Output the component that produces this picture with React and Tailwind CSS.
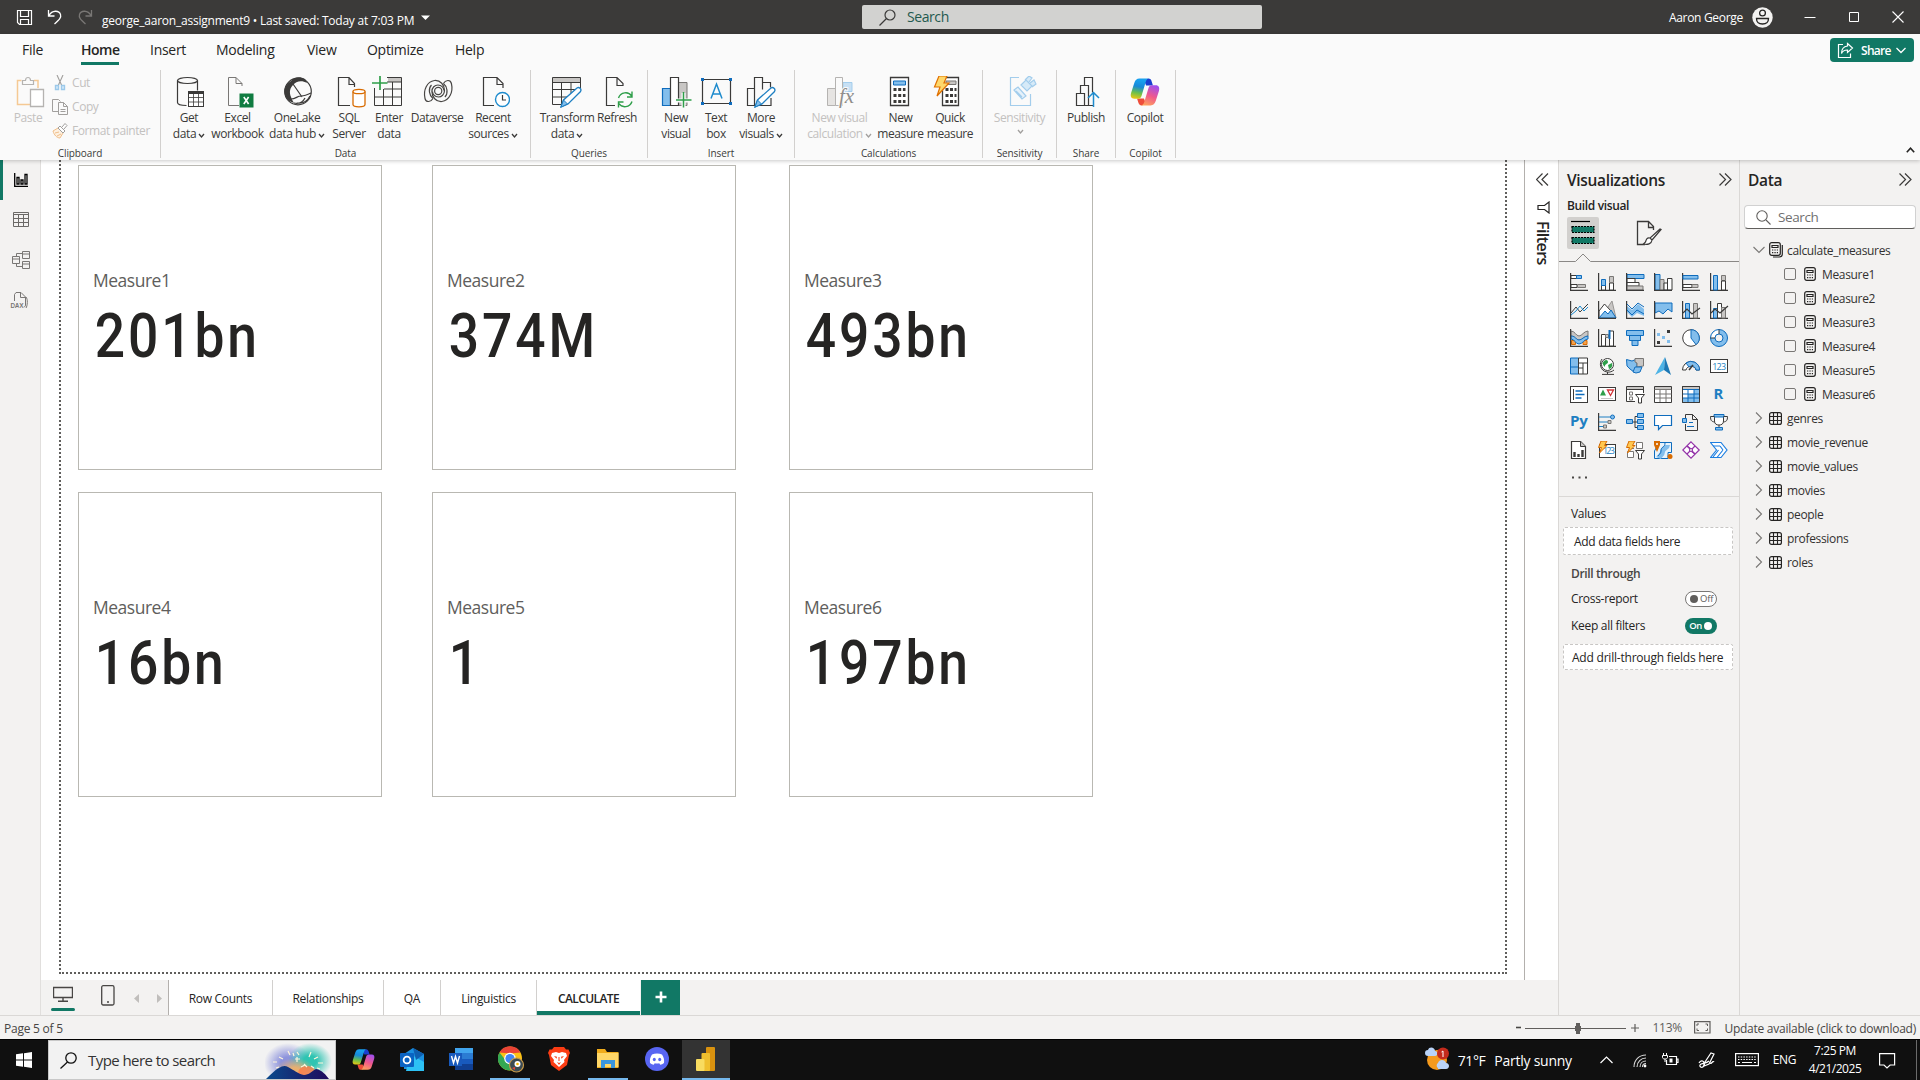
import React from "react";

const INK = "#3b3a39";
const BLUE = "#0f6cbd";
const SKY = "#83beec";
const GREY = "#c8c6c4";

function Svg({ w, h = w, children, className = "", vb }) {
  return (
    <svg width={w} height={h} viewBox={vb || `0 0 ${w} ${h}`} fill="none" className={"block shrink-0 " + className}>
      {children}
    </svg>
  );
}

function Caret({ color = INK }) {
  return (
    <svg width="7" height="6" viewBox="0 0 7 6" fill="none" className="ml-[2px] mt-[3px] block shrink-0">
      <path d="M1 1l2.500 3L6 1" stroke={color} strokeWidth="1.300" />
    </svg>
  );
}

function CopilotLogo({ size, id }) {
  return (
    <svg width={size} height={size} viewBox="0 0 28 28" className="block shrink-0">
      <defs>
        <linearGradient id={id + "a"} x1="10" y1="1" x2="6" y2="21" gradientUnits="userSpaceOnUse">
          <stop offset="0.1" stopColor="#18a0ee" />
          <stop offset="0.4" stopColor="#1789d8" />
          <stop offset="0.7" stopColor="#6cc04a" />
          <stop offset="1" stopColor="#f7c80c" />
        </linearGradient>
        <linearGradient id={id + "b"} x1="23" y1="8" x2="15" y2="27" gradientUnits="userSpaceOnUse">
          <stop offset="0" stopColor="#a04fee" />
          <stop offset="0.5" stopColor="#f0588c" />
          <stop offset="1" stopColor="#ffa45a" />
        </linearGradient>
      </defs>
      <path d="M17 1.500c2 0 2.800 1.200 3.300 2.900L21.400 8H15l-2-5z" fill="#1a3fd0" />
      <path d="M11 26.500c-2 0-2.800-1.200-3.300-2.900L6.600 20H13l2 5z" fill="#ee4d3a" />
      <path d="M8.800 1.500h9c-1.800 0-2.600 1.400-3.200 3.400l-3.800 12.500c-.5 1.700-1.500 2.800-3.400 2.800H4c-3 0-3.800-2.300-3-5.200L4 5.500c.8-2.500 2.300-4 4.800-4z" fill={`url(#${id}a)`} />
      <path d="M19.200 26.500h-9c1.800 0 2.600-1.400 3.200-3.400l3.800-12.500c.5-1.700 1.500-2.800 3.400-2.800H24c3 0 3.800 2.300 3 5.200l-3 9.500c-.8 2.500-2.300 4-4.800 4z" fill={`url(#${id}b)`} />
    </svg>
  );
}

const pageShape = "M21 10v-2.500L15 1.500H7.500v28H18M15 1.500v6h6";

const R = {
  getData: (
    <>
      <path d="M5.500 4.500v22c0 1.800 4 3 9 3M25.500 4.500v10" stroke={INK} strokeWidth="1.200" />
      <ellipse cx="15.500" cy="4.500" rx="10" ry="3" stroke={INK} strokeWidth="1.200" />
      <rect x="16.500" y="15.500" width="15" height="15" fill="#fff" stroke={INK} />
      <path d="M16.500 17h15" stroke={INK} strokeWidth="2" />
      <path d="M16.500 21.500h15M16.500 26h15M21.500 18v12M26.500 18v12" stroke={INK} strokeWidth=".8" />
    </>
  ),
  excel: (
    <>
      <path d={pageShape} stroke="#797775" />
      <rect x="18.500" y="17.500" width="14" height="14" fill="#107c41" />
      <path d="M22.800 21l4.800 7M27.600 21l-4.800 7" stroke="#fff" strokeWidth="1.600" />
    </>
  ),
  onelake: (
    <>
      <circle cx="18" cy="15.500" r="13.300" stroke={INK} strokeWidth="1.200" />
      <path d="M11 5c3-4 9-5 14-2l2 4c-5-3-11-2-14 2-3 3-4 7-2 12 1 3 2 4 3 6C7 25 4 20 4.500 14c.5-4 3-7 6.500-9z" fill={INK} />
      <path d="M13 8l9 13M11 23c5 0 6-3 10-3s6-1 10-3M14 27c5 1 9-1 11-5M17 27c7 1 11-3 13-7" stroke={INK} strokeWidth="1.200" />
    </>
  ),
  sql: (
    <>
      <path d="M22.500 11V7.500L17 1.500H6.500v28H18M17 1.500v7h5.500" stroke={INK} strokeWidth="1.200" />
      <path d="M21 15.500v13c0 1.500 2.500 2.300 6 2.300s6-.8 6-2.300v-13" fill="#fff" stroke="#d86b00" strokeWidth="1.300" />
      <ellipse cx="27" cy="15.500" rx="6" ry="2.200" fill="#fff" stroke="#d86b00" strokeWidth="1.300" />
    </>
  ),
  enter: (
    <>
      <path d="M16 2h13v4H16z" fill={GREY} />
      <path d="M15 1.500h14.500v28h-27V12M2.500 21h27M12 13h17.500M11.500 13v16M20.500 6v23M15 6h14.500" stroke={INK} strokeWidth="1" />
      <path d="M0 7h15.500M8 0v14" stroke="#2e9e49" strokeWidth="1.700" />
    </>
  ),
  dataverse: (
    <g stroke="#484644" strokeWidth="1.200">
      <path d="M13 22.500c-2 3.500-7 4.500-8 0C3 14 7 5.500 14.500 4.500c6-.5 10 4.500 10 10 0 4-3 6.500-6 6.500-4 0-6-3-6-5.500" />
      <path d="M13 22.500c-4-3-5-10-1.500-13.500" />
      <g transform="rotate(180 18.200 15)">
        <path d="M13 22.500c-2 3.500-7 4.500-8 0C3 14 7 5.500 14.500 4.500c6-.5 10 4.500 10 10 0 4-3 6.500-6 6.500-4 0-6-3-6-5.500" />
        <path d="M13 22.500c-4-3-5-10-1.500-13.500" />
      </g>
      <circle cx="18.200" cy="15" r="3.600" />
    </g>
  ),
  recent: (
    <>
      <path d="M27 12V7.500L21 1.500H7.500v28H18M21 1.500v7h6" stroke={INK} strokeWidth="1.200" />
      <circle cx="26.500" cy="23.500" r="7" fill="#fff" stroke="#1e8bcd" strokeWidth="1.400" />
      <path d="M26.500 19v5H30" stroke={INK} strokeWidth="1.200" />
    </>
  ),
  transform: (
    <>
      <path d="M3 2h27v4H3z" fill={GREY} />
      <path d="M12 28.500H2.500v-27h28V12M2.500 6.500h28M2.500 13.500H25M2.500 21H19M11.500 6.500v22M21 6.500V17" stroke={INK} />
      <path d="M11 31l2.500-7L27 12c2-1.500 5 1 3.500 3.500L18 28z" fill="#fff" stroke="#1e7fc2" strokeWidth="1.300" />
      <path d="M11 31l2.500-7 4 4z" fill={SKY} stroke="#1e7fc2" />
    </>
  ),
  refresh: (
    <>
      <path d="M23 10V7.500L17 1.500H6.500v28H15M17 1.500v8h6" stroke={INK} strokeWidth="1.200" />
      <path d="M18.500 22c2-6 10-7 13-2M32 15.500v5.500h-5M32 25.500c-2 6-10 7-13 2M18.500 31.500V26h5" stroke="#2e9e49" strokeWidth="1.400" />
    </>
  ),
  newVisual: (
    <>
      <path d="M3.500 12.500h8v17h-8z" fill={SKY} stroke={BLUE} strokeWidth="1.200" />
      <path d="M19 6.500h9v23h-9z" fill={GREY} stroke="#797775" />
      <path d="M11.500 1.500h8v28h-8z" fill="#fff" stroke={INK} strokeWidth="1.200" />
      <path d="M17 24.500h15M24.500 17v15" stroke="#fafafa" strokeWidth="4" />
      <path d="M17 24h15.500M24.500 16v15.500" stroke="#2e9e49" strokeWidth="1.500" />
    </>
  ),
  textBox: (
    <>
      <path d="M3.500 3.500h28v24h-28z" stroke={INK} strokeWidth="1.200" />
      <path d="M2 2h3v3H2zM30 2h3v3h-3zM2 26h3v3H2zM30 26h3v3h-3z" fill={BLUE} />
      <path d="M12 22.500L17.500 8 23 22.500M13.800 18h7.400" stroke="#1e8bcd" strokeWidth="1.500" />
    </>
  ),
  more: (
    <>
      <path d="M3.500 12.500h7v17h-7zM10.500 29.500v-28h8v12M18.500 6.500h8v5M27 22v7.500H15" stroke={INK} strokeWidth="1.200" />
      <path d="M11 31l2.500-7L27 12c2-1.500 5 1 3.500 3.500L18 28z" fill="#fff" stroke="#1e7fc2" strokeWidth="1.300" />
      <path d="M11 31l2.500-7 4 4z" fill={SKY} stroke="#1e7fc2" />
    </>
  ),
  visualCalc: (
    <>
      <path d="M4.500 12.500h8v17h-8z" fill="#e6e4e2" stroke="#b5b3b1" />
      <path d="M20 6.500h9v9h-9z" fill="#c7e0f4" stroke="#a3cdec" />
      <path d="M12.500 1.500h7v28h-7z" fill="#fafafa" stroke="#b5b3b1" />
      <text x="16" y="27" fontFamily="Liberation Serif" fontStyle="italic" fontSize="21" fill="#8f8d8b" stroke="#fafafa" strokeWidth="2" paintOrder="stroke">fx</text>
    </>
  ),
  newMeasure: (
    <>
      <path d="M6.500 1.500h18v28h-18z" stroke={INK} strokeWidth="1.300" fill="#fff" />
      <path d="M9.500 5h12v4h-12z" fill={SKY} stroke={BLUE} />
      <path d="M9.500 13.500h12M9.500 19.500h12M9.500 25.500h12" stroke={INK} strokeWidth="3" strokeDasharray="3 1.700" />
    </>
  ),
  quick: (
    <>
      <path d="M9.500 1.500h16v28h-16z" stroke={INK} strokeWidth="1.300" fill="#fff" />
      <path d="M13 5h10v3.500H13z" fill={GREY} stroke="#797775" />
      <path d="M12.500 13.500h11M12.500 19.500h11M12.500 25.500h11" stroke={INK} strokeWidth="3" strokeDasharray="3 1.500" />
      <path d="M6 0h8l-3 7h5L4 20l3-9H1.500z" fill="#ffd86b" stroke="#e07000" strokeWidth="1.200" />
    </>
  ),
  sensitivity: (
    <g stroke="#a3cdec" strokeWidth="1.200">
      <path d="M16 1.500H7.500v28h20V18" />
      <path d="M11 14l4-3 8 9-4 3zM13 15l6 6" fill="#e5f1fa" />
      <path d="M18 9l5-5 6 6-5 5zM22 4l4-4 3 2-3 4M27 7l4-3 2 4-4 3" fill="#d6eaf8" />
    </g>
  ),
  publish: (
    <>
      <path d="M7.500 17.500h8v12h-8zM11.500 17V9.500h8v20H15M15.500 9V1.500h8v15M19.500 29.500H24" stroke={INK} strokeWidth="1.200" />
      <path d="M24.500 31V17M19 22l5.500-5.500L30 22" stroke="#1e8bcd" strokeWidth="1.500" />
    </>
  ),
};

function Btn({ icon, l1, l2, caret, width, off }) {
  return (
    <div className={"flex shrink-0 flex-col items-center pt-[6px] " + width + (off ? " text-[#c3c1bf]" : " text-[#3b3a39]")}>
      <div className="h-[34px]">
        {icon === "copilot" ? (
          <div className="pt-px"><CopilotLogo size={30} id="ribbon" /></div>
        ) : (
          <Svg w={34} h={32}>{R[icon]}</Svg>
        )}
      </div>
      <span className="whitespace-nowrap text-[12px] leading-4 tracking-[-0.035em]">{l1}</span>
      <span className="flex items-center whitespace-nowrap text-[12px] leading-4 tracking-[-0.035em]">
        {l2}
        {caret && <Caret color={off ? "#a19f9d" : INK} />}
      </span>
    </div>
  );
}

function Group({ label, width, pad = "", children }) {
  return (
    <div className={"flex h-[88px] shrink-0 flex-col justify-between border-r border-[#d2d0ce] " + width}>
      <div className={"flex " + pad}>{children}</div>
      <div className="h-[10px] text-center text-[10px] leading-[11px] text-[#3b3a39] tracking-[-0.01em]">{label}</div>
    </div>
  );
}

function TitleBar() {
  return (
    <header className="flex h-[34px] shrink-0 items-center bg-[#3b3a39] text-white">
      <div className="flex w-[862px] items-center pl-[16px]">
        <Svg w={17}>
          <path d="M1.500 1.500h14v14h-12l-2-2zM4.500 1.500v6h8v-6M4.500 15.500v-5h8v5" stroke="#fff" strokeWidth="1.200" />
        </Svg>
        <Svg w={16} className="ml-[14px]">
          <path d="M1.500 1v6h6M2 6.500C5 1 12 1 13.500 5.500c1 3-1 5-6 9.500" stroke="#fff" strokeWidth="1.300" />
        </Svg>
        <Svg w={16} className="ml-[14px]">
          <path d="M14.500 1v6h-6M14 6.500C11 1 4 1 2.500 5.500c-1 3 1 5 6 9.500" stroke="#797775" strokeWidth="1.300" />
        </Svg>
        <span className="ml-[9px] mt-[7px] whitespace-nowrap text-[12px] leading-4 tracking-[-0.019em]">
          george_aaron_assignment9 • Last saved: Today at 7:03 PM
        </span>
        <Svg w={9} h={6} className="ml-[7px] mt-[2px]"><path d="M0 0.500h9L4.500 5z" fill="#fff" /></Svg>
      </div>
      <div className="flex h-[24px] w-[400px] items-center rounded-[2px] bg-[#d2d2d0] pl-[17px]">
        <Svg w={17}><circle cx="11" cy="6" r="5" stroke={INK} strokeWidth="1.200" /><path d="M7.500 9.500l-7 7" stroke={INK} strokeWidth="1.200" /></Svg>
        <span className="ml-[11px] text-[14px] leading-5 tracking-[-0.03em] text-[#23594e]">Search</span>
      </div>
      <div className="flex flex-1 items-center justify-end pr-[16px]">
        <span className="mr-[9px] mt-[2px] text-[12px] tracking-[-0.025em]">Aaron George</span>
        <Svg w={21}>
          <circle cx="10.500" cy="10.500" r="10.200" fill="#f3f2f1" />
          <circle cx="10.500" cy="6" r="2.900" stroke="#252423" strokeWidth="1.300" />
          <path d="M4.500 11.500h12c0 3.500-2 5.500-6 5.500s-6-2-6-5.500z" stroke="#252423" strokeWidth="1.300" />
        </Svg>
        <Svg w={12} className="ml-[31px]"><path d="M0.500 6.500h11" stroke="#fff" /></Svg>
        <Svg w={12} className="ml-[32px]"><path d="M1.500 1.500h9v9h-9z" stroke="#fff" /></Svg>
        <Svg w={12} className="ml-[32px]"><path d="M0.500 0.500l11 11M11.500 0.500l-11 11" stroke="#fff" strokeWidth="1.100" /></Svg>
      </div>
    </header>
  );
}

function Ribbon() {
  return (
    <div className="relative z-10 flex h-[126px] shrink-0 flex-col bg-[#fafafa] shadow-[0_1px_4px_rgba(0,0,0,0.22)]">
      <div className="flex h-[36px] items-start text-[14px] leading-5 tracking-[-0.02em] text-[#252423]">
        <span className="w-[58px] pl-[22px] pt-[6px]">File</span>
        <div className="ml-[23px] flex w-[38px] flex-col pt-[6px]">
          <span className="font-semibold tracking-[-0.035em]">Home</span>
          <span className="mt-[2px] h-[3px] bg-[#117865]" />
        </div>
        <span className="ml-[31px] w-[66px] pt-[6px]">Insert</span>
        <span className="w-[91px] pt-[6px]">Modeling</span>
        <span className="w-[60px] pt-[6px]">View</span>
        <span className="w-[88px] pt-[6px]">Optimize</span>
        <span className="flex-1 pt-[6px]">Help</span>
        <div className="mr-[6px] mt-[4px] flex h-[24px] w-[84px] items-center rounded-[4px] bg-[#117865] pl-[7px] text-white">
          <Svg w={17}>
            <path d="M6 2.500H1.500v13h12v-4" stroke="#fff" strokeWidth="1.200" />
            <path d="M10.500 1.500l5 4.500-5 4.500V8C7 8 5.500 9 4.500 11.500c0-4 2-7 6-7.500z" stroke="#fff" strokeWidth="1.200" />
          </Svg>
          <span className="ml-[7px] pt-px text-[12px] font-semibold tracking-[-0.06em]">Share</span>
          <Svg w={10} h={7} className="ml-[5px]"><path d="M0.500 1L5 5.500 9.500 1" stroke="#fff" strokeWidth="1.300" /></Svg>
        </div>
      </div>
      <div className="flex h-[90px]">
        <Group label="Clipboard" width="w-[161px]">
          <div className="flex w-[52px] flex-col items-center pl-[8px] pt-[6px]">
            <div className="h-[34px]">
              <Svg w={30} h={32}>
                <path d="M6.500 4.500H2.500v24H15M19 4.500h4V12" stroke="#f5c994" strokeWidth="1.500" />
                <path d="M7.500 8.500v-4h3c0-4 5-4 5 0h3v4z" stroke="#b5b3b1" strokeWidth="1.200" />
                <path d="M15.500 13.500h13v17h-13z" fill="#fff" stroke="#b5b3b1" strokeWidth="1.300" />
              </Svg>
            </div>
            <span className="-ml-[4px] text-[12px] leading-4 tracking-[-0.035em] text-[#c3c1bf]">Paste</span>
          </div>
          <div className="flex flex-col text-[12px] tracking-[-0.035em] text-[#c3c1bf]">
            <div className="flex h-[24px] items-center gap-[4px] pt-[2px]">
              <Svg w={16}>
                <path d="M5 0l5 11M11 0L6 11" stroke="#a19f9d" strokeWidth="1.100" />
                <path d="M3.500 10.500h3v4h-3zM9.500 10.500h3v4h-3z" stroke="#9cc9ea" strokeWidth="1.400" fill="#d6eaf8" />
              </Svg>Cut
            </div>
            <div className="flex h-[24px] items-center gap-[4px] pt-[2px]">
              <Svg w={16}>
                <path d="M6 12.500H0.500v-12h6l2 2" stroke="#a19f9d" />
                <path d="M6.500 3.500h5l4 4v8h-9zM11.500 3.500v4h4M8.500 10.500h5M8.500 12.500h5" stroke="#a19f9d" />
              </Svg>Copy
            </div>
            <div className="flex h-[24px] items-center gap-[4px] whitespace-nowrap pt-[2px]">
              <Svg w={16}>
                <path d="M1 8l5-3 5 5-3 5C5 15 2 12 1 8zM3 10l4-1M5 13l4-2" stroke="#f0be8a" fill="#fdf0e0" />
                <path d="M6 5l2-2 5 5-2 2zM10 4l3-3.500 2 2L12 6" stroke="#a19f9d" fill="#fff" />
              </Svg>Format painter
            </div>
          </div>
        </Group>
        <Group label="Data" width="w-[370px]" pad="pl-[4px]">
          <Btn icon="getData" l1="Get" l2="data" caret width="w-[48px]" />
          <Btn icon="excel" l1="Excel" l2="workbook" width="w-[49px]" />
          <Btn icon="onelake" l1="OneLake" l2="data hub" caret width="w-[70px]" />
          <Btn icon="sql" l1="SQL" l2="Server" width="w-[34px]" />
          <Btn icon="enter" l1="Enter" l2="data" width="w-[46px]" />
          <Btn icon="dataverse" l1="Dataverse" width="w-[50px]" />
          <Btn icon="recent" l1="Recent" l2="sources" caret width="w-[62px]" />
        </Group>
        <Group label="Queries" width="w-[117px]" pad="pl-[7px]">
          <Btn icon="transform" l1="Transform" l2="data" caret width="w-[58px]" />
          <Btn icon="refresh" l1="Refresh" width="w-[42px]" />
        </Group>
        <Group label="Insert" width="w-[147px]" pad="pl-[8px]">
          <Btn icon="newVisual" l1="New" l2="visual" width="w-[40px]" />
          <Btn icon="textBox" l1="Text" l2="box" width="w-[40px]" />
          <Btn icon="more" l1="More" l2="visuals" caret width="w-[50px]" />
        </Group>
        <Group label="Calculations" width="w-[188px]" pad="pl-[9px]">
          <Btn icon="visualCalc" l1="New visual" l2="calculation" caret off width="w-[71px]" />
          <Btn icon="newMeasure" l1="New" l2="measure" width="w-[51px]" />
          <Btn icon="quick" l1="Quick" l2="measure" width="w-[48px]" />
        </Group>
        <Group label="Sensitivity" width="w-[74px]"><Btn icon="sensitivity" l1="Sensitivity" l2="" caret off width="w-[73px]" /></Group>
        <Group label="Share" width="w-[59px]"><Btn icon="publish" l1="Publish" width="w-[58px]" /></Group>
        <Group label="Copilot" width="w-[60px]"><Btn icon="copilot" l1="Copilot" width="w-[58px]" /></Group>
        <div className="flex flex-1 items-end justify-end pb-[7px] pr-[5px]">
          <Svg w={9} h={6}><path d="M0.800 5.200l3.700-4 3.700 4" stroke="#252423" strokeWidth="1.600" /></Svg>
        </div>
      </div>
    </div>
  );
}

function LeftNav() {
  return (
    <nav className="flex w-[41px] shrink-0 flex-col border-r border-[#e1dfdd] bg-[#f3f2f1]">
      <div className="flex h-[40px] items-center border-l-[3px] border-[#117865] pl-[11px]">
        <Svg w={15}><path d="M0.700 0v13.300H14" stroke="#000" strokeWidth="1.300" /><path d="M3 4.500h2v6.500H3zM7 7h2v4H7zM11 1.500h2V11h-2z" stroke="#000" strokeWidth="1.300" /></Svg>
      </div>
      <div className="flex h-[40px] items-center pb-px pl-[13px]">
        <Svg w={16} h={15}><path d="M0.500 0.500h15v14H0.500zM0.500 2.500h15M0.500 6.500h15M0.500 10.500h15M5.500 3v11M10.500 3v11" stroke="#6b6967" /></Svg>
      </div>
      <div className="flex h-[40px] items-center pl-[12px]">
        <Svg w={18}><path d="M0.500 5.500h7v7h-7zM0.500 8h7M10.500 0.500h7v7h-7zM10.500 3h7M10.500 10.500h7v7h-7zM10.500 13h7M4.500 5V2.500h6M4.500 13v2.500h6" stroke="#797775" /></Svg>
      </div>
      <div className="flex h-[40px] items-center pl-[10px]">
        <Svg w={18} h={17}>
          <path d="M4.500 9V2.500l1.500-2h5l4.500 4.500v8c0 1.500-1 2-2 2M10.500 0.500v5h5M16 5c2 2 1.500 9 0 11" stroke="#797775" />
          <text x="0.500" y="16" fontSize="6.500" fontWeight="bold" textLength="13" fontFamily="Liberation Sans" fill="#797775" stroke="#f3f2f1" strokeWidth="1.500" paintOrder="stroke">DAX</text>
        </Svg>
      </div>
    </nav>
  );
}

const cards = [
  ["Measure1", "201bn"], ["Measure2", "374M"], ["Measure3", "493bn"],
  ["Measure4", "16bn"], ["Measure5", "1"], ["Measure6", "197bn"],
];
const tabs = [
  ["Row Counts", "w-[104px]"], ["Relationships", "w-[111px]"], ["QA", "w-[57px]"], ["Linguistics", "w-[96px]"],
];

function Canvas() {
  return (
    <div className="h-[820px] w-[1484px] border-r border-[#b3b0ad] bg-white pl-[18px]">
      <div className="h-[814px] w-[1448px] border-2 border-t-0 border-dotted border-[#605e5c] pl-[17px] pt-[5px]">
        <div className="grid grid-cols-[354px_357px_304px] gap-y-[22px]">
          {cards.map(([name, value]) => (
            <div key={name} className="h-[305px] w-[304px] border border-[#b9b8b2] pl-[14px] pt-[102px]">
              <div className="text-[17.500px] leading-6 tracking-[-0.028em] text-[#605e5c]">{name}</div>
              <div className="mt-[13px] origin-left scale-x-[0.86] whitespace-nowrap pl-[2px] font-['Roboto'] text-[62px] font-medium leading-[62px] tracking-[0.055em] text-[#252423]">{value}</div>
            </div>
          ))}
        </div>
      </div>
    </div>
  );
}

function PageTabs() {
  return (
    <div className="flex h-[35px] bg-[#f3f2f1] text-[12px] tracking-[-0.025em] text-[#252423]">
      <div className="flex w-[128px] items-start border-r border-[#b3b0ad] pl-[10px]">
        <div className="flex w-[24px] flex-col items-center">
          <Svg w={20} h={16} className="mt-[6px]"><path d="M0.500 1.500h19v10H0.500zM10 12v3M5 15.300h10" stroke="#484644" strokeWidth="1.400" /></Svg>
          <span className="mt-[6px] h-[3px] w-[24px] rounded-full bg-[#117865]" />
        </div>
        <Svg w={14} h={21} className="ml-[26px] mt-[5px]"><rect x="0.700" y="0.700" width="12.300" height="19.300" rx="1.500" stroke="#484644" strokeWidth="1.300" /><circle cx="7" cy="17" r="1" fill="#484644" /></Svg>
        <Svg w={6} h={9} className="ml-[19px] mt-[14px]"><path d="M5 0v9L0 4.500z" fill="#c0bebc" /></Svg>
        <Svg w={6} h={9} className="ml-[16px] mt-[14px]"><path d="M1 0v9l5-4.500z" fill="#c0bebc" /></Svg>
      </div>
      {tabs.map(([t, w]) => (
        <div key={t} className={"flex items-center justify-center border-r border-[#d2d0ce] bg-white pt-[2px] " + w}>{t}</div>
      ))}
      <div className="flex w-[103px] items-center justify-center border-b-4 border-[#117865] bg-white pt-[7px] font-semibold tracking-[-0.05em]">CALCULATE</div>
      <div className="ml-px flex w-[39px] items-center justify-center bg-[#117865] pb-[2px]">
        <Svg w={12}><path d="M6 0.500v11M0.500 6h11" stroke="#fff" strokeWidth="2.600" /></Svg>
      </div>
    </div>
  );
}

function Chevrons({ left }) {
  return (
    <Svg w={13}>
      {left ? <path d="M6.500 0.500l-6 6 6 6M12 0.500l-6 6 6 6" stroke={INK} strokeWidth="1.200" /> : <path d="M0.500 0.500l6 6-6 6M6 0.500l6 6-6 6" stroke={INK} strokeWidth="1.200" />}
    </Svg>
  );
}

function FiltersPane() {
  return (
    <div className="flex w-[33px] flex-col items-center bg-white pt-[13px]">
      <div className="pl-[2px]"><Chevrons left /></div>
      <Svg w={13} className="ml-[4px] mt-[15px]"><path d="M12 1v11L7.500 8.500H1v-4h6.500z" stroke="#252423" strokeWidth="1.200" /></Svg>
      <span className="ml-[3px] mt-[7px] text-[16px] font-semibold leading-[18px] tracking-[-0.035em] text-[#252423] [writing-mode:vertical-rl]">Filters</span>
    </div>
  );
}

const axis = <path d="M0.600 0v17.400H18" stroke={INK} strokeWidth="1.200" />;
const bl = { fill: SKY, stroke: BLUE };
const gr = { fill: GREY, stroke: "#797775" };
const wh = { fill: "#fff", stroke: INK };
const bolt = <path d="M3 0h6L6.500 4.500H9L1.500 12l2-5.500H0.500z" fill="#ffc850" stroke="#d86b00" />;
const funnel = <path d="M9.500 9.500h9L15.500 13v5h-3v-5z" fill="#fff" stroke={INK} />;

const V = [
  <>{axis}<path d="M1 2.500h6v3H1zM1 11.500h6v3H1z" {...wh} /><path d="M6.500 2.500h5v3h-5z" {...bl} /><path d="M7.500 11.500h8v3h-8z" {...gr} /></>,
  <>{axis}<path d="M3.500 12h4v5h-4zM11.500 10h4v7h-4z" {...wh} /><path d="M3.500 6.500h4v6h-4z" {...bl} /><path d="M11.500 3.500h4v6h-4z" {...gr} /></>,
  <><path d="M1 1.500h17v4H1z" {...bl} /><path d="M1 5.500h8v4H1zM1 9.500h12v3.500H1z" {...wh} /><path d="M1 13h16v4H1z" {...gr} />{axis}</>,
  <><path d="M1 1.500h5V17H1z" {...bl} /><path d="M6 6.500h4V17H6z" {...gr} /><path d="M10 10h3.500v7H10z" {...wh} /><path d="M13.500 5.500H18V17h-4.500z" {...wh} />{axis}</>,
  <>{axis}<path d="M1 2.500h15v3.500H1z" {...bl} /><path d="M1 11.500h9v3H1z" {...wh} /><path d="M10 11.500h6v3h-6z" {...gr} /></>,
  <>{axis}<path d="M3.500 2.500h4V17h-4z" {...bl} /><path d="M11.500 2.500h4v5h-4z" {...gr} /><path d="M11.500 8h4v9h-4z" {...wh} /></>,
  <>{axis}<path d="M1 12l5-6 4 5 8-8" stroke={INK} /><path d="M1 14l5-4 4-5 4 5 4-4" stroke="#1e8bcd" /></>,
  <><path d="M8 9l6-9 4 17H9z" fill={GREY} stroke="#979593" /><path d="M1 10l5.500-7L13 10l-5 7H1z" {...wh} /><path d="M1 17l6-7 3 3 3-4 5 8z" {...bl} />{axis}</>,
  <><path d="M1 5l5 4 6-6 6 5v9H1z" fill={SKY} /><path d="M1 11l5 5 5-4 7 3v2H1z" fill="#f3f2f1" />{axis}<path d="M1 3l5 5 6-6 6 4M1 9l5 5 5-5 7 4" stroke={BLUE} /></>,
  <><path d="M1 2h17v9l-4-3-5 5-4-3-4 2z" {...bl} />{axis}</>,
  <>{axis}<path d="M3.500 2.500h4V17h-4z" {...bl} /><path d="M11.500 2.500h4V17h-4z" {...gr} /><path d="M1 12l4-4 5 5 8-6" stroke={INK} strokeWidth="1.200" /></>,
  <>{axis}<path d="M3.500 7.500h4V17h-4z" {...bl} /><path d="M7.500 2.500h4V17h-4z" {...wh} /><path d="M11.500 6.500h4V17h-4z" {...gr} /><path d="M1 12l4-4 5 4 8-7" stroke={INK} strokeWidth="1.200" /></>,
  <><path d="M1.500 11.500h4v4h-4zM13 11.500h4v4h-4z" fill="#f5a04a" stroke="#d86b00" /><path d="M1 2c4 0 5 5 8 5s5-5 9-5v5c-4 0-5 4-9 4S5 7 1 7z" {...gr} /><path d="M1 7c5 0 5 4 8 4s5-4 9-4v3c-4 0-5 5-9 5s-4-5-8-5z" {...bl} />{axis}</>,
  <>{axis}<path d="M3.500 5.500h4V17h-4zM11.500 2h4v15h-4z" {...wh} /><path d="M7.500 5.500h3v3h-3z" {...gr} /><path d="M10.500 1h2v9h-2z" fill={BLUE} /></>,
  <g {...bl}><path d="M0.500 1.500h17v5h-17zM3.500 6.500h11v5h-11zM6 11.500h6v5H6z" /></g>,
  <>{axis}<path d="M3 4h3v3H3zM8 7h3v3H8zM13 11h3v3h-3z" fill={SKY} /><path d="M13 1h3v3h-3zM3 12h3v3H3z" fill={INK} /></>,
  <><circle cx="9" cy="9" r="8.300" fill="#fff" stroke={INK} /><path d="M9 0.700a8.300 8.300 0 0 1 5 14.900L9 9z" {...bl} /></>,
  <><circle cx="9" cy="9" r="6.300" stroke={SKY} strokeWidth="4.500" /><path d="M9 2.700A6.300 6.300 0 0 0 2.700 9" stroke="#fff" strokeWidth="4" /><circle cx="9" cy="9" r="8.500" stroke={BLUE} /><circle cx="9" cy="9" r="4" stroke={BLUE} /><path d="M9 0.500v4.500M0.500 9H5" stroke={INK} /></>,
  <><path d="M0.500 1h8v16h-8z" {...bl} /><path d="M0.500 10h8" stroke={BLUE} /><path d="M8.500 1h9v16h-9zM8.500 6h9M13 6v11M8.500 11H13" {...wh} /></>,
  <><circle cx="9.500" cy="7.500" r="6" fill="#fff" stroke={INK} /><path d="M6 4c2-2 4-1 4 1S7 7 7 9 5 8 4.500 6zM10 8l4-2c1 3-1 6-3 6z" fill="#2e9e49" /><path d="M4 2C1 6 2 14 9 15c3 .5 5-.5 7-2M9.500 15v2M4 17.400h12" stroke={INK} /></>,
  <><path d="M0.500 2.500L6 4l5-2v7l-3 6-4-3-3-3z" {...bl} /><path d="M9 1.500h8.500V9L11 10V6L9 5z" {...gr} /><path d="M9 10h7l-2 5-4 1-3-1z" {...bl} /></>,
  <><path d="M11 0L1 18l9-5z" fill="#4db3e6" /><path d="M11 0l6 18-7-5z" fill="#1c78b5" /></>,
  <><path d="M0.500 13a8.500 8.500 0 0 1 17 0H14c-1-5-9-5-10 0z" fill="#fff" stroke={INK} /><path d="M4 6a8.500 8.500 0 0 1 13.500 7H14c0-3-4-5-7-3z" {...bl} /><path d="M7 13l4-5" stroke={INK} strokeWidth="1.500" /></>,
  <><rect x="0.500" y="2.500" width="17" height="13" fill="#fff" stroke={INK} /><text x="2.200" y="12.500" fontSize="9" textLength="13.600" fontFamily="Open Sans" fill="#1e7fc2">123</text></>,
  <><rect x="0.500" y="1.500" width="17" height="16" fill="#fff" stroke={INK} /><path d="M3.500 4v11" stroke={INK} /><path d="M5.500 6h7M5.500 9.500h9M5.500 13h6" stroke={BLUE} strokeWidth="1.600" /></>,
  <><rect x="0.500" y="2.500" width="17" height="13" fill="#fff" stroke={INK} /><path d="M2 10.500L5 4.500l3 6z" fill="#2e9e49" /><path d="M3 13.500h12" stroke={GREY} /><path d="M9.500 5h6l-3 5.500z" fill="#fff" stroke="#d13438" strokeWidth="1.300" /></>,
  <><path d="M9 16.500H0.500v-15h17V8" fill="#fff" stroke={INK} /><path d="M1 2h16v2.500H1z" fill={GREY} /><path d="M0.500 4.500h17" stroke={INK} /><path d="M3.500 7h3v3h-3zM3.500 12h3v3h-3z" stroke="#797775" />{funnel}</>,
  <><path d="M0.500 1.500h17v16h-17z" {...wh} /><path d="M1 2h16v2.500H1z" fill={GREY} /><path d="M0.500 4.500h17M0.500 9h17M0.500 13h17M6 5v12M12 5v12" stroke="#797775" /></>,
  <><path d="M0.500 1.500h17v16h-17z" {...wh} /><path d="M1 2h16v2.500H1z" fill={GREY} /><path d="M12 5h5v12h-5zM1 13h11v4H1zM6 9h6v4H6z" fill={SKY} /><path d="M0.500 4.500h17M0.500 9h17M0.500 13h17M6 5v12M12 5v12" stroke={BLUE} /><path d="M0.500 1.500h17v16h-17z" stroke={INK} /></>,
  <text x="3.500" y="14" fontSize="15" fontWeight="700" fontFamily="Open Sans" fill="#1e7fc2" textLength="9.500" lengthAdjust="spacingAndGlyphs">R</text>,
  <text x="0" y="13" fontSize="15" fontWeight="700" fontFamily="Open Sans" fill="#1e7fc2" textLength="17.500" lengthAdjust="spacingAndGlyphs">Py</text>,
  <>{axis}<path d="M1 4h11M1 9h9M1 13.500h5" stroke="#1e7fc2" /><circle cx="14.500" cy="4" r="2" {...bl} /><path d="M10 7.500h3v3h-3zM5.500 12h3v3h-3z" {...gr} /></>,
  <><path d="M6 9h6M9 3.500v11M9 3.500h3M9 14.500h3" stroke={INK} /><g {...bl}><path d="M0.500 6.500h6v4h-6zM11.500 0.500h6v4h-6zM11.500 6.500h6v4h-6zM11.500 12.500h6v4h-6z" /></g></>,
  <path d="M0.500 2.500h17v10H8.500l-4 4v-4h-4z" fill="#fff" stroke={BLUE} strokeWidth="1.200" />,
  <><path d="M3.500 5V1.500h7l5 5v11h-12V11M10.500 1.500v5h5" stroke={INK} /><path d="M0.500 5.500h4v4h-4z" {...bl} /><path d="M7 9.500h4M5 13.500h7" stroke={BLUE} /></>,
  <><path d="M4.500 1.500h9V8c0 3-2 4-4.500 4s-4.500-1-4.500-4z" fill="#fff" stroke={INK} /><path d="M4 1.500h10v2.500H4z" {...bl} /><path d="M4.500 3.500h-4c0 4 1 5 4 5.500M13.500 3.500h4c0 4-1 5-4 5.500M9 12v3" stroke={INK} /><path d="M5.500 14.500h7v2.500h-7z" {...bl} /></>,
  <><path d="M1.500 0.500h9l5 5v12h-14z" fill="#fff" stroke={INK} strokeWidth="1.200" /><path d="M10.500 0.500v5h5" fill={GREY} stroke={INK} /><path d="M4.500 11v5M8.500 13v3M12.500 9v7" stroke={INK} strokeWidth="2.400" /></>,
  <><rect x="1.500" y="3.500" width="16" height="13" fill="#fff" stroke={INK} /><text x="5" y="13" fontSize="9" textLength="11.500" fontFamily="Open Sans" fill="#1e7fc2">123</text>{bolt}</>,
  <><path d="M10.500 1.500h6v6h-6zM1.500 10.500h6v6h-6zM3 7.500h5" fill="#fff" stroke="#797775" />{bolt}{funnel}</>,
  <><path d="M5 1.500h12.500v10H14v6H0.500V10z" fill="#e8f3fb" stroke={BLUE} /><path d="M13.500 4c0 3-5 3-5 7 0 3-3 4-4 6" stroke={SKY} strokeWidth="5" /><path d="M11 2c0 5-4 3-4 8 0 3-2 3-3 5" stroke={BLUE} /><path d="M0 0h6v4L3 11 0 4z" fill="#d86b00" /><circle cx="3" cy="3" r="1" fill="#fff" /><circle cx="16" cy="15.500" r="2.500" fill="#d86b00" /></>,
  <g stroke="#9332a8" strokeWidth="1.200"><path d="M9 0.800L17.200 9 9 17.200 0.800 9z" fill="#fff" /><path d="M5 5l8 8M13 5l-8 8" /><path d="M5 5l4 3M13 13l-4-3" /><circle cx="9" cy="9" r="1.500" fill="#f3f2f1" /></g>,
  <g stroke="#1e7fe0" strokeWidth="1.200"><path d="M0.500 1.500h10.500l6 7.500-6 7.500H0.500L6.500 9z" fill="#fff" /><path d="M3 5h7M8.500 9L3 16M13 9l-6 7.500M10 5l3 4" /></g>,
];

function Toggle({ on }) {
  return on ? (
    <span className="flex h-[16px] w-[32px] items-center justify-end rounded-full bg-[#117865] pr-[5px] text-[9.500px] font-semibold leading-none tracking-[-0.04em] text-white">
      On<span className="ml-[2px] h-[8px] w-[8px] rounded-full bg-white" />
    </span>
  ) : (
    <span className="flex h-[16px] w-[32px] items-center rounded-full border border-[#797775] bg-white pl-[4px] text-[9.500px] leading-none tracking-[-0.02em] text-[#605e5c]">
      <span className="mr-[2px] h-[8px] w-[8px] shrink-0 rounded-full bg-[#605e5c]" />Off
    </span>
  );
}

function VisualizationsPane() {
  return (
    <section className="flex w-[181px] flex-col border-l border-[#dad8d6] text-[12px] leading-4 tracking-[-0.025em] text-[#252423]">
      <div className="flex h-[38px] items-center justify-between pl-[8px] pr-[7px]">
        <span className="pt-px text-[15.500px] font-semibold leading-5 tracking-[-0.022em]">Visualizations</span>
        <Chevrons />
      </div>
      <div className="h-[19px] pl-[8px] font-semibold tracking-[-0.03em]">Build visual</div>
      <div className="flex h-[36px] items-start pl-[8px]">
        <div className="flex h-[32px] w-[32px] items-center justify-center rounded-[2px] bg-[#d2d0ce]">
          <Svg w={24} h={26}>
            <path d="M0 1.500h19" stroke="#000" strokeWidth="1.200" />
            <path d="M1 6.500h22v6H1zM1 17.500h22v6H1z" fill="#117865" stroke="#000" strokeDasharray="2 1" strokeWidth="1.200" />
          </Svg>
        </div>
        <Svg w={26} className="ml-[37px] mt-[3px]">
          <path d="M9 24.500H1.500v-23h11l5 5V10M12.500 1.500v6h5" stroke={INK} strokeWidth="1.300" />
          <path d="M25 9.500L16 20l-2-2L24 9zM14 18c-3-1-4 2-4.500 4l-2 2c4 1 8 0 8.500-4" fill="#fff" stroke={INK} strokeWidth="1.200" />
        </Svg>
      </div>
      <Svg w={180} h={9}><path d="M0 8.500h16.500l7.500-7.500 7.500 7.500H180" stroke="#8a8886" /></Svg>
      <div className="ml-[11px] mt-[11px] grid grid-cols-[repeat(6,28px)] auto-rows-[28px]">
        {V.map((icon, i) => (
          <svg key={i} width="19" height="19" viewBox="0 0 19 19" fill="none" className="block">{icon}</svg>
        ))}
      </div>
      <div className="h-[28px] border-b border-[#dad8d6] pl-[13px] pt-[7px]">
        <Svg w={16} h={3}><path d="M0 0.500h2v2H0zM6.500 0.500h2v2h-2zM13 0.500h2v2h-2z" fill="#484644" /></Svg>
      </div>
      <div className="mt-[9px] pl-[12px]">Values</div>
      <div className="ml-[4px] mt-[5px] flex h-[28px] w-[170px] items-center rounded-[2px] border border-dashed border-[#c8c6c4] bg-white pl-[10px] pt-px">Add data fields here</div>
      <div className="mt-[11px] pl-[12px] font-semibold tracking-[-0.03em] text-[#484644]">Drill through</div>
      <div className="mt-[9px] flex h-[16px] items-center justify-between pl-[12px] pr-[22px]">Cross-report<Toggle /></div>
      <div className="mt-[11px] flex h-[16px] items-center justify-between pl-[12px] pr-[22px]">Keep all filters<Toggle on /></div>
      <div className="ml-[4px] mt-[10px] flex h-[26px] w-[170px] items-center whitespace-nowrap rounded-[2px] border border-dashed border-[#c8c6c4] bg-white pl-[8px] pt-px tracking-[-0.018em]">Add drill-through fields here</div>
    </section>
  );
}

const calc = (
  <>
    <rect x="0.700" y="0.700" width="10.600" height="12.600" rx="2" />
    <path d="M3 3.500h6v2H3zM3 8h1.300M5.400 8h1.300M7.800 8H9M3 10.700h1.300M5.400 10.700h1.300M7.800 10.700H9" />
  </>
);

function DataPane() {
  return (
    <section className="flex flex-1 flex-col border-l border-[#dad8d6] text-[12px] leading-4 tracking-[-0.028em] text-[#323130]">
      <div className="flex h-[38px] items-center justify-between pl-[8px] pr-[8px]">
        <span className="pt-px text-[15.500px] font-semibold leading-5 tracking-[-0.02em] text-[#252423]">Data</span>
        <Chevrons />
      </div>
      <div className="ml-[4px] mt-[7px] flex h-[24px] w-[172px] items-center rounded-[4px] border border-[#d1d1d1] border-b-[#605e5c] bg-white pl-[11px]">
        <Svg w={15}><circle cx="6" cy="6" r="5.200" stroke="#605e5c" strokeWidth="1.100" /><path d="M10 10l4.500 4.500" stroke="#605e5c" strokeWidth="1.100" /></Svg>
        <span className="ml-[7px] text-[13.500px] leading-5 tracking-[-0.03em] text-[#707070]">Search</span>
      </div>
      <div className="mt-[9px] flex h-[24px] items-center pl-[13px]">
        <Svg w={12} h={8}><path d="M0.500 1L6 6.500 11.500 1" stroke="#797775" strokeWidth="1.100" /></Svg>
        <Svg w={14} h={16} className="ml-[4px]"><g stroke="#252423" strokeWidth="1.200">{calc}<path d="M13.300 3v9c0 2-1 3-3 3H4" /></g></Svg>
        <span className="ml-[4px] pt-px">calculate_measures</span>
      </div>
      {[1, 2, 3, 4, 5, 6].map((n) => (
        <div key={n} className="flex h-[24px] items-center pl-[44px]">
          <span className="h-[12px] w-[12px] rounded-[2px] border border-[#797775]" />
          <Svg w={12} h={14} className="ml-[8px]"><g stroke="#252423" strokeWidth="1.200">{calc}</g></Svg>
          <span className="ml-[6px] pt-px">Measure{n}</span>
        </div>
      ))}
      {["genres", "movie_revenue", "movie_values", "movies", "people", "professions", "roles"].map((t) => (
        <div key={t} className="flex h-[24px] items-center pl-[15px]">
          <Svg w={8} h={12}><path d="M1 0.500L6.500 6 1 11.500" stroke="#797775" strokeWidth="1.100" /></Svg>
          <Svg w={13} className="ml-[6px]"><rect x="0.600" y="0.600" width="11.800" height="11.800" rx="2" stroke="#252423" strokeWidth="1.200" /><path d="M4.500 1v11M8.500 1v11M1 4.500h11M1 8.500h11" stroke="#252423" strokeWidth="1.100" /></Svg>
          <span className="ml-[5px] pt-px">{t}</span>
        </div>
      ))}
    </section>
  );
}

function StatusBar() {
  return (
    <div className="flex h-[24px] shrink-0 items-center border-t border-[#dad8d6] bg-[#f3f2f1] pl-[4px] pr-[4px] text-[12px] tracking-[-0.02em] text-[#484644]">
      <span className="flex-1 pt-[2px]">Page 5 of 5</span>
      <Svg w={5} h={3}><path d="M0 1.500h5" stroke="#484644" strokeWidth="1.600" /></Svg>
      <Svg w={101} h={12} className="ml-[4px]"><path d="M0 6.500h101" stroke="#605e5c" /><path d="M51 1h4v11h-4z" fill="#605e5c" /><path d="M50 4h6v5h-6z" fill="#605e5c" /></Svg>
      <Svg w={8} className="ml-[5px]"><path d="M0 4h8M4 0v8" stroke="#605e5c" strokeWidth="1.200" /></Svg>
      <span className="ml-[13px] w-[30px] text-[#605e5c]">113%</span>
      <Svg w={17} h={13} className="ml-[12px]"><path d="M0.600 0.600h15.400v11.400H0.600z" stroke="#605e5c" strokeWidth="1.200" /><path d="M5 3H3v2M3 7.500v2h2M11.500 3h2v2M13.500 7.500v2h-2" stroke="#605e5c" /></Svg>
      <span className="ml-[13px] whitespace-nowrap pt-[2px] tracking-[-0.021em]">Update available (click to download)</span>
    </div>
  );
}

function Illustration() {
  return (
    <Svg w={74} h={38}>
      <defs>
        <radialGradient id="sk1"><stop offset="0.300" stopColor="#8d93dc" /><stop offset="1" stopColor="#8d93dc" stopOpacity="0" /></radialGradient>
        <radialGradient id="sk2"><stop offset="0.300" stopColor="#2fc4b2" /><stop offset="1" stopColor="#2fc4b2" stopOpacity="0" /></radialGradient>
        <radialGradient id="sk3"><stop offset="0.200" stopColor="#e8b070" /><stop offset="1" stopColor="#e8b070" stopOpacity="0" /></radialGradient>
        <linearGradient id="mt" x1="0" y1="0" x2="1" y2="0"><stop offset="0" stopColor="#0b4a8c" /><stop offset="1" stopColor="#1f0a5c" /></linearGradient>
      </defs>
      <ellipse cx="23" cy="22" rx="24" ry="20" fill="url(#sk1)" />
      <ellipse cx="45" cy="20" rx="22" ry="18" fill="url(#sk2)" />
      <ellipse cx="30" cy="29" rx="20" ry="12" fill="url(#sk3)" />
      <ellipse cx="42" cy="32" rx="9" ry="7" fill="#ff7a45" opacity=".8" />
      <path d="M28 12l1 3M34 14l-2-3M23 10l2 4M14 16l4 2M8 21h4M11 27l3-1M46 11l-2 5M53 16l-4 2M58 22h-5M49 27l-3-2M39 23l3 3M36 26l4-2M55 28l-3-1M32 16v5M30 18h5" stroke="#fff6dc" strokeWidth="1.200" />
      <path d="M1 38c5-5 9-9 13-11 3-2 6-3 9-1 6 3 10 7 16 8 5 0 8-4 12-6 6 1 10 6 13 10z" fill="url(#mt)" />
    </Svg>
  );
}

const apps = [
  [<CopilotLogo size={23} id="bar" />, 0],
  [<Svg w={24}><path d="M4 7l9-6 11 6v15H4z" fill="#1a8fe0" /><path d="M10 7l14 8v9H6z" fill="#2dc2f5" /><path d="M13 1l11 6-8 6z" fill="#0f5fb0" /><rect y="6" width="14" height="14" rx="1" fill="#0a63c2" /><circle cx="7" cy="13" r="3.400" stroke="#fff" strokeWidth="1.800" /></Svg>, 0],
  [<Svg w={24}><path d="M6 1h18v6H6z" fill="#41a5ee" /><path d="M6 6h18v6H6z" fill="#2b7cd3" /><path d="M6 12h18v5H6z" fill="#185abd" /><path d="M6 17h18v6H6z" fill="#103f91" /><rect y="6" width="13" height="13" fill="#185abd" /><path d="M2.500 9l2 7 2-6.500 2 6.500 2-7" stroke="#fff" strokeWidth="1.400" /></Svg>, 0],
  [<Svg w={27} className="ml-[2px]"><circle cx="12" cy="12.500" r="12" fill="#fbc116" /><path d="M1.500 6.500A12 12 0 0 1 22.500 6.500L12 7.500z" fill="#ea4335" /><path d="M1.500 6.500A12 12 0 0 0 12 24.500l5-9-10-2z" fill="#34a853" /><circle cx="12" cy="12.500" r="5.800" fill="#fff" /><circle cx="12" cy="12.500" r="4.600" fill="#4285f4" /><circle cx="18.500" cy="19" r="7" fill="#3c4a52" stroke="#c79a4a" strokeWidth="1.200" /><circle cx="19.500" cy="18" r="3" fill="#fff" /><circle cx="19.500" cy="18" r="1.300" fill="#f7b500" /><path d="M14 22l3-1v3z" fill="#ea4335" /></Svg>, 1],
  [<Svg w={22} h={24}><path d="M6 0h10l2 2.500 2.500 0L22 6l-1 2-2 10-8 6-8-6L1 8 0 6l1.500-3.500H4z" fill="#fb3c13" /><path d="M4 6l4-1 3 1 3-1 4 1 1 3-3 4 .5 2-5.500 5-5.500-5 .5-2-3-4z" fill="#fff" /><path d="M6 9l3 .8-.5 2zM16 9l-3 .8.5 2zM9 15l2 1 2-1-2 3zM10.500 10h1v4h-1z" fill="#fb3c13" /></Svg>, 0],
  [<Svg w={22} h={20}><path d="M0 0h8l2 3h11.500v16H0z" fill="#f0ac1c" /><path d="M0 4h21.500v14H0z" fill="#ffd767" /><path d="M4 19v-8h14v8h-4v-4H8v4z" fill="#3a96dd" /></Svg>, 1],
  [<Svg w={24}><circle cx="12" cy="12" r="12" fill="#5865f2" /><path d="M7 7.500c3-1.300 7-1.300 10 0 1.700 2.500 2.500 5.500 2 8.500-1.200 1-2.500 1.500-3.800 1.700l-.9-1.500c-1.500.4-3.100.4-4.600 0l-.9 1.500C7.500 17.500 6.200 17 5 16c-.5-3 .3-6 2-8.500z" fill="#fff" /><ellipse cx="9.300" cy="12.500" rx="1.500" ry="1.700" fill="#5865f2" /><ellipse cx="14.700" cy="12.500" rx="1.500" ry="1.700" fill="#5865f2" /></Svg>, 0],
  [<Svg w={20} h={25}><rect x="10" y="0" width="9" height="24" rx="1" fill="#d9920f" /><rect x="5.500" y="6" width="8.500" height="18" rx="1" fill="#efbf2e" /><rect x="0" y="12" width="8.500" height="12" rx="1" fill="#f8dc60" /></Svg>, 2],
];

function Taskbar() {
  return (
    <footer className="flex h-[41px] shrink-0 border-t border-black bg-[#101010] text-white">
      <div className="flex w-[48px] items-center justify-center">
        <Svg w={16}><path d="M0 2.300l7-1v6.200H0zM8 1.200L16 0v7.500H8zM0 8.500h7v6.200l-7-1zM8 8.500h8V16l-8-1.200z" fill="#fff" /></Svg>
      </div>
      <div className="flex h-[40px] w-[288px] items-center border border-[#c8c8c8] bg-[#f2f2f2] pl-[11px]">
        <Svg w={17}><circle cx="11" cy="6" r="5.200" stroke="#111" strokeWidth="1.300" /><path d="M7.500 10l-7 6.500" stroke="#111" strokeWidth="1.300" /></Svg>
        <span className="ml-[11px] whitespace-nowrap text-[15px] tracking-[-0.038em] text-[#333]">Type here to search</span>
        <div className="ml-auto mr-[-4px]"><Illustration /></div>
      </div>
      <div className="ml-[3px] flex gap-[1px]">
        {apps.map(([icon, state], i) => (
          <div key={i} className={"flex w-[48px] flex-col items-center " + (state === 2 ? "bg-[#333333]" : "")}>
            <div className="flex h-[38px] items-center justify-center">{icon}</div>
            {state > 0 && <div className={"h-[2px] bg-[#76b9ed] " + (state === 2 ? "w-[48px]" : "w-[40px]")} />}
          </div>
        ))}
      </div>
      <div className="flex flex-1 items-center justify-end text-[14px] tracking-[-0.03em]">
        <Svg w={25} h={24} className="mb-[3px]">
          <circle cx="12" cy="13" r="10" fill="#f59a1c" />
          <path d="M3 9a3 3 0 0 1 0-6c1-4 7-3 7 1 3 0 3 5 0 5zM13 21a3 3 0 0 1 0-5c1-4 7-4 8 0 4 0 4 6 0 6h-8z" fill="#b9d3f7" />
          <circle cx="18" cy="6.500" r="6" fill="#c42b1c" />
          <path d="M16.500 5l1.500-1v6" stroke="#fff" />
        </Svg>
        <span className="ml-[8px]">71°F</span>
        <span className="ml-[9px] whitespace-nowrap tracking-[-0.018em]">Partly sunny</span>
        <Svg w={13} h={8} className="ml-[28px]"><path d="M0.500 7l6-6 6 6" stroke="#fff" strokeWidth="1.200" /></Svg>
        <Svg w={14} className="ml-[20px] mt-[2px]"><path d="M1 13C1 6 6 1 13 1M4 13c0-5 4-9 9-9M7 13c0-3.500 2.500-6 6-6M9.500 13c0-2 1.500-3.500 3.500-3.500" stroke="#d8d8d8" strokeWidth="1.100" /><circle cx="12" cy="12" r="1.400" fill="#fff" /></Svg>
        <Svg w={17} h={14} className="ml-[15px]"><path d="M4.500 7v4.500h10v-8H7M14.500 6H16v3.500h-1.500" stroke="#fff" strokeWidth="1.200" /><path d="M7.500 5.500h3v4h-3z" fill="#fff" /><path d="M1.500 0v2M4.500 0v2M0.500 2.500h5v2c0 2-5 2-5 0zM3 6v3" stroke="#fff" /></Svg>
        <Svg w={18} h={17} className="ml-[19px]"><path d="M1 11c2-4 6-2 5 2s-5 2-4 0 6-1 9-4M6 14l1-4 6-9 3 1-5 10zM12 11c1 2 3-3 4-1" stroke="#fff" strokeWidth="1.200" /></Svg>
        <Svg w={24} h={14} className="ml-[19px]"><rect x="0.600" y="0.600" width="22.800" height="12" stroke="#fff" strokeWidth="1.200" /><path d="M3 4h18M3 6.500h18" stroke="#fff" strokeDasharray="1.500 1.200" strokeWidth="1.200" /><path d="M3 9.500h2M7 9.500h10M19 9.500h2" stroke="#fff" strokeWidth="1.200" /></Svg>
        <span className="ml-[14px] text-[12px]">ENG</span>
        <div className="ml-[13px] flex w-[52px] flex-col items-center whitespace-nowrap text-[12px] leading-[18px]"><span>7:25 PM</span><span className="tracking-[-0.04em]">4/21/2025</span></div>
        <Svg w={17} className="ml-[18px]"><path d="M0.600 1.600h15v11.400h-4.500L8 16l-3-3H0.600z" stroke="#fff" strokeWidth="1.200" /></Svg>
        <span className="ml-[20px] mr-[3px] h-[40px] w-px bg-[#6b6b6b]" />
      </div>
    </footer>
  );
}

export default function App() {
  return (
    <div className="flex h-[1080px] w-[1920px] flex-col overflow-hidden bg-[#f3f2f1] font-['Open_Sans','Noto_Sans',sans-serif]">
      <TitleBar />
      <Ribbon />
      <div className="flex h-[855px] shrink-0">
        <LeftNav />
        <div className="flex w-[1517px] flex-col">
          <div className="flex"><Canvas /><FiltersPane /></div>
          <PageTabs />
        </div>
        <VisualizationsPane />
        <DataPane />
      </div>
      <StatusBar />
      <Taskbar />
    </div>
  );
}
